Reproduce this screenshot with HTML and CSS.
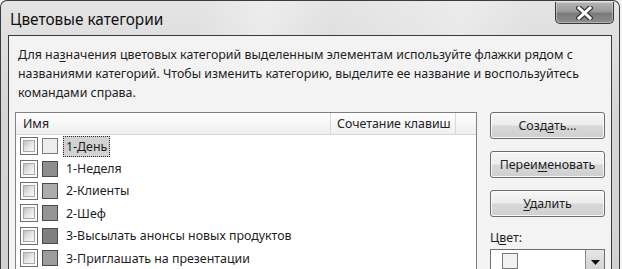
FILE: index.html
```html
<!DOCTYPE html>
<html lang="ru">
<head>
<meta charset="utf-8">
<title>Цветовые категории</title>
<link rel="stylesheet" href="styles.css">
</head>
<body>
<div class="window">
  <div class="titlebar">
    <div class="title">Цветовые категории</div>
    <div class="close">
      <svg width="17" height="14" viewBox="0 0 17 14">
        <path d="M3 2 L14 12 M14 2 L3 12" stroke="#3a3a3a" stroke-width="5.5" stroke-linecap="square" fill="none"/>
        <path d="M3 2 L14 12 M14 2 L3 12" stroke="#ffffff" stroke-width="3" stroke-linecap="square" fill="none"/>
      </svg>
    </div>
  </div>
  <div class="client">
    <p class="desc">Для на<u>з</u>начения цветовых категорий выделенным элементам используйте флажки рядом с<br>названиями категорий. Чтобы изменить категорию, выделите ее название и воспользуйтесь<br>командами справа.</p>
    <div class="main">
      <div class="listbox">
        <div class="header">
          <div class="col col-name">Имя</div>
          <div class="col col-keys">Сочетание клавиш</div>
          <div class="col col-rest"></div>
        </div>
        <div class="row"><span class="check"></span><span class="swatch c1"></span><span class="label selected">1-День</span></div>
        <div class="row"><span class="check"></span><span class="swatch c2"></span><span class="label">1-Неделя</span></div>
        <div class="row"><span class="check"></span><span class="swatch c3"></span><span class="label">2-Клиенты</span></div>
        <div class="row"><span class="check"></span><span class="swatch c4"></span><span class="label">2-Шеф</span></div>
        <div class="row"><span class="check"></span><span class="swatch c5"></span><span class="label">3-Высылать анонсы новых продуктов</span></div>
        <div class="row"><span class="check"></span><span class="swatch c6"></span><span class="label">3-Приглашать на презентации</span></div>
      </div>
      <div class="side">
        <button class="btn">Созд<u>а</u>ть...</button>
        <button class="btn">Переи<u>м</u>еновать</button>
        <button class="btn"><u>У</u>далить</button>
        <div class="color-label">Ц<u>в</u>ет:</div>
        <div class="dropdown">
          <span class="dd-swatch"></span>
          <span class="dd-arrow"><svg width="9" height="5" viewBox="0 0 9 5"><path d="M0 0 H9 L4.5 5 Z" fill="#111"/></svg></span>
        </div>
      </div>
    </div>
  </div>
</div>
</body>
</html>
```
FILE: styles.css
```css
html, body {
  margin: 0;
  padding: 0;
}
body {
  width: 622px;
  height: 269px;
  overflow: hidden;
  background: #f4f4f4;
  font-family: "Noto Sans", "Open Sans", sans-serif;
  color: #1e1e1e;
}
u {
  text-decoration: underline;
  text-underline-offset: 2px;
}
.window {
  width: 620px;
  height: 269px;
  box-sizing: border-box;
  border: 1px solid #3c3c3c;
  border-bottom: none;
  border-radius: 7px 7px 0 0;
  padding: 0 7px;
  overflow: hidden;
  background:
    linear-gradient(100deg, rgba(255,255,255,0) 30%, rgba(255,255,255,0.35) 40%, rgba(255,255,255,0) 50%, rgba(255,255,255,0.3) 70%, rgba(255,255,255,0) 80%),
    linear-gradient(180deg, #e4e4e4 0%, #d6d6d6 40%, #d2d2d2 100%);
}
.titlebar {
  display: flex;
  align-items: flex-start;
  height: 34px;
}
.title {
  font-size: 15.4px;
  line-height: 20px;
  padding: 9px 0 0 2px;
  color: #111;
  white-space: nowrap;
}
.close {
  margin-left: auto;
  margin-right: -2px;
  margin-top: 1px;
  width: 59px;
  height: 22px;
  box-sizing: border-box;
  border: 1px solid #3a3a3a;
  border-top: none;
  border-radius: 0 0 5px 5px;
  background: linear-gradient(180deg, #b4b4b4 0%, #9a9a9a 45%, #7a7a7a 55%, #8e8e8e 100%);
  box-shadow: inset 0 0 0 1px rgba(255,255,255,0.35);
  display: flex;
  align-items: center;
  justify-content: center;
}
.client {
  border: 1px solid #3a3a3a;
  background: #f3f3f3;
  height: 260px;
}
.desc {
  margin: 9px 0 0 9px;
  font-size: 12.4px;
  line-height: 19px;
  white-space: nowrap;
  color: #1e1e1e;
}
.main {
  display: flex;
  align-items: flex-start;
  margin-top: 10px;
}
.listbox {
  margin-left: 6px;
  width: 462px;
  height: 200px;
  box-sizing: border-box;
  border: 1px solid #7f7f7f;
  background: #ffffff;
}
.header {
  display: flex;
  height: 21px;
  border-bottom: 1px solid #d5d5d5;
  background: linear-gradient(180deg, #ffffff 0%, #f7f7f7 50%, #efefef 100%);
  font-size: 12.4px;
  line-height: 21px;
}
.col {
  box-sizing: border-box;
  white-space: nowrap;
  color: #222;
}
.col-name {
  width: 315px;
  padding-left: 7px;
  border-right: 1px solid #d8d8d8;
}
.col-keys {
  width: 125px;
  padding-left: 6px;
  border-right: 1px solid #d8d8d8;
}
.col-rest {
  flex: 1;
}
.row {
  display: flex;
  align-items: center;
  height: 22.4px;
  padding-left: 4px;
  font-size: 12.4px;
}
.check {
  width: 18px;
  height: 18px;
  box-sizing: border-box;
  border: 1px solid #6e6e6e;
  padding: 2px;
  background: #fafafa;
  display: flex;
}
.check::before {
  content: "";
  flex: 1;
  border: 1px solid #a9a9a9;
  background: linear-gradient(135deg, #bdbdbd 0%, #e2e2e2 45%, #fbfbfb 100%);
}
.swatch {
  margin-left: 4px;
  width: 16px;
  height: 16px;
  box-sizing: border-box;
  border: 1px solid #4a4a4a;
}
.c1 { background: #ededed; border-color: #7a7a7a; }
.c2 { background: #8e8e8e; }
.c3 { background: #acacac; }
.c4 { background: #959595; }
.c5 { background: #7f7f7f; }
.c6 { background: #9d9d9d; }
.label {
  margin-left: 5px;
  padding: 0 2px;
  line-height: 19px;
  border: 1px dotted transparent;
  white-space: nowrap;
  color: #1e1e1e;
}
.label.selected {
  background: #d2d2d2;
  border-color: #2a2a2a;
}
.side {
  margin-left: 13px;
  width: 115px;
  display: flex;
  flex-direction: column;
}
.btn {
  height: 27px;
  margin: 0 0 12px 0;
  padding: 0;
  box-sizing: border-box;
  border: 1px solid #6c6c6c;
  border-radius: 3px;
  background: linear-gradient(180deg, #f6f6f6 0%, #ececec 48%, #d8d8d8 52%, #cfcfcf 100%);
  box-shadow: inset 0 0 0 1px rgba(255,255,255,0.8);
  font-family: "Noto Sans", "Open Sans", sans-serif;
  font-size: 12.4px;
  line-height: 24px;
  color: #1e1e1e;
  text-align: center;
  white-space: nowrap;
}
.color-label {
  margin-top: -6px;
  font-size: 12.4px;
  line-height: 19px;
  padding-top: 5px;
  color: #1e1e1e;
}
.dropdown {
  margin-top: 2px;
  height: 26px;
  box-sizing: border-box;
  border: 1px solid #6f6f6f;
  background: #ffffff;
  display: flex;
  align-items: flex-start;
}
.dd-swatch {
  margin: 3px 0 0 11px;
  width: 16px;
  height: 16px;
  box-sizing: border-box;
  border: 1px solid #7a7a7a;
  background: #f2f2f2;
}
.dd-arrow {
  margin-left: auto;
  width: 19px;
  height: 24px;
  box-sizing: border-box;
  border-left: 1px solid #8a8a8a;
  background: linear-gradient(180deg, #e6e6e6 0%, #cfcfcf 100%);
  display: flex;
  align-items: center;
  justify-content: center;
}
```
